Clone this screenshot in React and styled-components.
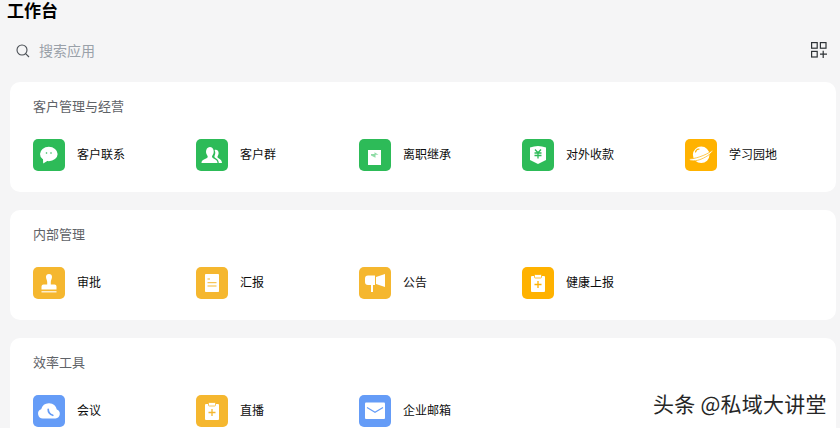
import React from 'react';
import styled, { createGlobalStyle } from 'styled-components';

const GlobalStyle = createGlobalStyle`
    html, body {
        margin: 0;
        padding: 0;
        height: 428px;
        overflow: hidden;
        background: #f5f5f6;
        font-family: "Noto Sans CJK SC", "Liberation Sans", sans-serif;
    }
`;

const Page = styled.div`
    position: relative;
    width: 840px;
    height: 428px;
    overflow: hidden;
    background: #f5f5f6;
`;

const Title = styled.h1`
    margin: 0;
    padding-left: 7px;
    height: 20px;
    font-size: 17px;
    line-height: 20px;
    font-weight: 700;
    color: #000;
`;

const SearchBar = styled.div`
    display: flex;
    align-items: center;
    height: 24px;
    margin-top: 19px;
    padding: 0 13px 0 16px;
`;

const SearchText = styled.span`
    margin-left: 9px;
    padding-bottom: 1px;
    font-size: 14px;
    line-height: 23px;
    color: #9aa1a9;
`;

const AddButton = styled.span`
    display: flex;
    margin-left: auto;
    margin-bottom: 3px;
`;

const Cards = styled.div`
    display: flex;
    flex-direction: column;
    gap: 18px;
    margin: 19px 4px 0 10px;
`;

const Card = styled.section`
    height: 110px;
    padding: 16px 23px 0;
    box-sizing: border-box;
    background: #fff;
    border-radius: 10px;
`;

const CardTitle = styled.h2`
    margin: 0;
    padding-bottom: 2px;
    font-size: 13px;
    line-height: 16px;
    font-weight: 400;
    color: #5f6368;
`;

const AppGrid = styled.div`
    display: grid;
    grid-template-columns: repeat(5, 163px);
    margin-top: 23px;
`;

const AppItem = styled.div`
    display: flex;
    align-items: center;
    height: 32px;
`;

const IconTile = styled.span`
    display: flex;
    align-items: center;
    justify-content: center;
    flex: none;
    width: 32px;
    height: 32px;
    border-radius: 5px;
    background: ${(props) => props.$color};
`;

const AppName = styled.span`
    margin-left: 12px;
    padding-bottom: 2px;
    font-size: 12px;
    line-height: 30px;
    color: #0d0d0d;
`;

const Watermark = styled.div`
    position: absolute;
    left: 653px;
    top: 389px;
    font-size: 21px;
    letter-spacing: 0.25px;
    line-height: 29px;
    white-space: nowrap;
    color: #262626;
    text-shadow: 1px 1px 1px rgba(255, 255, 255, 0.9), -1px -1px 1px rgba(255, 255, 255, 0.7);
`;

const GREEN = '#2dbb58';
const AMBER = '#ffb200';
const GOLD = '#f5b72f';
const BLUE = '#659cf7';

const Glyph = ({ children }) => (
    <svg width="32" height="32" viewBox="0 0 32 32" fill="none">{children}</svg>
);

const ChatIcon = () => (
    <Glyph>
        <ellipse cx="15.8" cy="15" rx="8.8" ry="7.2" fill="#fff" />
        <path d="M10 19.5 L10.2 24.5 L15 21.5 Z" fill="#fff" />
        <circle cx="13.5" cy="14" r="0.8" fill={GREEN} />
        <circle cx="18" cy="14" r="0.8" fill={GREEN} />
    </Glyph>
);

const GroupIcon = () => (
    <Glyph>
        <path d="M5.5 24 C5.5 20.5 9 20.5 11.5 18.5 C12 17.6 11.6 17 11 16 C10 14.4 9.8 12.6 10.3 11 C11 8.8 12.6 8 14 8 C15.5 8 17 9 17.5 11 C18 12.8 17.7 14.6 16.7 16 C16 17 15.8 17.6 16.3 18.5 C18.5 20.5 21.5 20.5 21.5 24 Z" fill="#fff" />
        <path d="M18.5 11 C20.5 10 23 11.5 22.6 14.5 C22.4 16 21.6 17 21.4 18 C21.5 19.4 26 20 26 24 L22.8 24 C22.8 21 20.6 19.8 18.8 18.6 C18.2 18 18.4 16.8 19 15.6 C19.5 14 19.3 12.3 18.5 11 Z" fill="#fff" />
    </Glyph>
);

const ResignIcon = () => (
    <Glyph>
        <rect x="9" y="11" width="13" height="15" fill="#fff" />
        <path d="M12 15 H15.5 V13.2 L19.5 15.8 H16.5 V18.8 L12 16.4 Z" fill="#8fdca6" />
    </Glyph>
);

const ShieldYenIcon = () => (
    <Glyph>
        <path d="M8 8.5 Q16 5.5 24 8.5 V21 L16 25 L8 21 Z" fill="#fff" />
        <path d="M13 10.5 L16 13.8 L19 10.5 M12.5 14 H19.5 M12.5 16.5 H19.5 M16 13.8 V19.5" stroke={GREEN} strokeWidth="1.3" />
    </Glyph>
);

const PlanetIcon = () => (
    <Glyph>
        <circle cx="16.2" cy="15.8" r="8.3" fill="#fff" />
        <path d="M4 20 C9 20 20 17 28 11 C28.4 12.8 22.5 17.6 16 20.2 C11 22.2 5 22.6 4 20 Z" fill="#fff" stroke={AMBER} strokeWidth="0.7" />
        <path d="M10.5 13 A4 4 0 0 1 14 10" stroke={AMBER} strokeWidth="1.2" strokeLinecap="round" />
    </Glyph>
);

const StampIcon = () => (
    <Glyph>
        <path d="M13 10 A3 3 0 1 1 19 10 C19 12 17.8 13 17.8 15 V17.5 H21.5 A2 2 0 0 1 23.5 19.5 V22.5 H8.5 V19.5 A2 2 0 0 1 10.5 17.5 H14.2 V15 C14.2 13 13 12 13 10 Z" fill="#fff" />
        <rect x="8.5" y="24" width="15" height="1.5" fill="#fff" opacity="0.75" />
    </Glyph>
);

const ReportIcon = () => (
    <Glyph>
        <rect x="9" y="7" width="14" height="18" rx="0.8" fill="#fff" />
        <path d="M11.5 12 H14 M11.5 15.7 H20.5 M11.5 19 H20.5" stroke={GOLD} strokeWidth="1" />
    </Glyph>
);

const MegaphoneIcon = () => (
    <Glyph>
        <path d="M6 11.5 A3 3 0 0 1 9 8.5 H16 V18 H9 A3 3 0 0 1 6 15 Z" fill="#fff" />
        <path d="M17 10 L26 7 V20 L17 17 Z" fill="#fff" />
        <rect x="12" y="18" width="2" height="7" fill="#fff" />
    </Glyph>
);

const ClipboardIcon = ({ color }) => (
    <Glyph>
        <path d="M10 9 H22 A1 1 0 0 1 23 10 V24 A1 1 0 0 1 22 25 H10 A1 1 0 0 1 9 24 V10 A1 1 0 0 1 10 9 Z" fill="#fff" />
        <rect x="12.5" y="7.5" width="7" height="3.5" rx="0.8" fill="#fff" stroke={color} strokeWidth="0.8" />
        <path d="M16 14 V21 M12.5 17.5 H19.5" stroke={color} strokeWidth="1.3" />
    </Glyph>
);

const CloudIcon = () => (
    <Glyph>
        <path d="M10 23.5 A4.8 4.8 0 0 1 8.2 14.2 A8 8 0 0 1 23.8 14.6 A4.6 4.6 0 0 1 22.5 23.5 Z" fill="#fff" />
        <path d="M15.2 14.3 C15.2 17 17 19.5 19.8 20.3" stroke={BLUE} strokeWidth="1.7" strokeLinecap="round" />
    </Glyph>
);

const MailIcon = () => (
    <Glyph>
        <rect x="6" y="7.5" width="20" height="16.5" rx="1" fill="#fff" />
        <path d="M8 12.5 L16 17.3 L24 12.5" stroke={BLUE} strokeWidth="1.2" />
    </Glyph>
);

const sections = [
    {
        title: '客户管理与经营',
        apps: [
            { name: '客户联系', color: GREEN, icon: <ChatIcon /> },
            { name: '客户群', color: GREEN, icon: <GroupIcon /> },
            { name: '离职继承', color: GREEN, icon: <ResignIcon /> },
            { name: '对外收款', color: GREEN, icon: <ShieldYenIcon /> },
            { name: '学习园地', color: AMBER, icon: <PlanetIcon /> },
        ],
    },
    {
        title: '内部管理',
        apps: [
            { name: '审批', color: GOLD, icon: <StampIcon /> },
            { name: '汇报', color: GOLD, icon: <ReportIcon /> },
            { name: '公告', color: GOLD, icon: <MegaphoneIcon /> },
            { name: '健康上报', color: AMBER, icon: <ClipboardIcon color={AMBER} /> },
        ],
    },
    {
        title: '效率工具',
        apps: [
            { name: '会议', color: BLUE, icon: <CloudIcon /> },
            { name: '直播', color: GOLD, icon: <ClipboardIcon color={GOLD} /> },
            { name: '企业邮箱', color: BLUE, icon: <MailIcon /> },
        ],
    },
];

const App = () => {
    return (
        <Page>
            <GlobalStyle />
            <Title>工作台</Title>
            <SearchBar>
                <svg width="14" height="14" viewBox="0 0 14 14" fill="none" stroke="#4a4f55" strokeWidth="1.1">
                    <circle cx="6" cy="6" r="5" />
                    <path d="M9.6 9.6 L13 13" />
                </svg>
                <SearchText>搜索应用</SearchText>
                <AddButton>
                    <svg width="16" height="16" viewBox="0 0 16 16" fill="none" stroke="#2e3236" strokeWidth="1.2">
                        <rect x="0.6" y="0.6" width="5.6" height="5.6" />
                        <rect x="9.4" y="0.6" width="5.6" height="5.6" />
                        <rect x="0.6" y="9.4" width="5.6" height="5.6" />
                        <path d="M9 12.2 H16 M12.2 8.8 V16" />
                    </svg>
                </AddButton>
            </SearchBar>
            <Cards>
                {sections.map((section) => (
                    <Card key={section.title}>
                        <CardTitle>{section.title}</CardTitle>
                        <AppGrid>
                            {section.apps.map((app) => (
                                <AppItem key={app.name}>
                                    <IconTile $color={app.color}>{app.icon}</IconTile>
                                    <AppName>{app.name}</AppName>
                                </AppItem>
                            ))}
                        </AppGrid>
                    </Card>
                ))}
            </Cards>
            <Watermark>头条 @私域大讲堂</Watermark>
        </Page>
    );
};

export default App;
